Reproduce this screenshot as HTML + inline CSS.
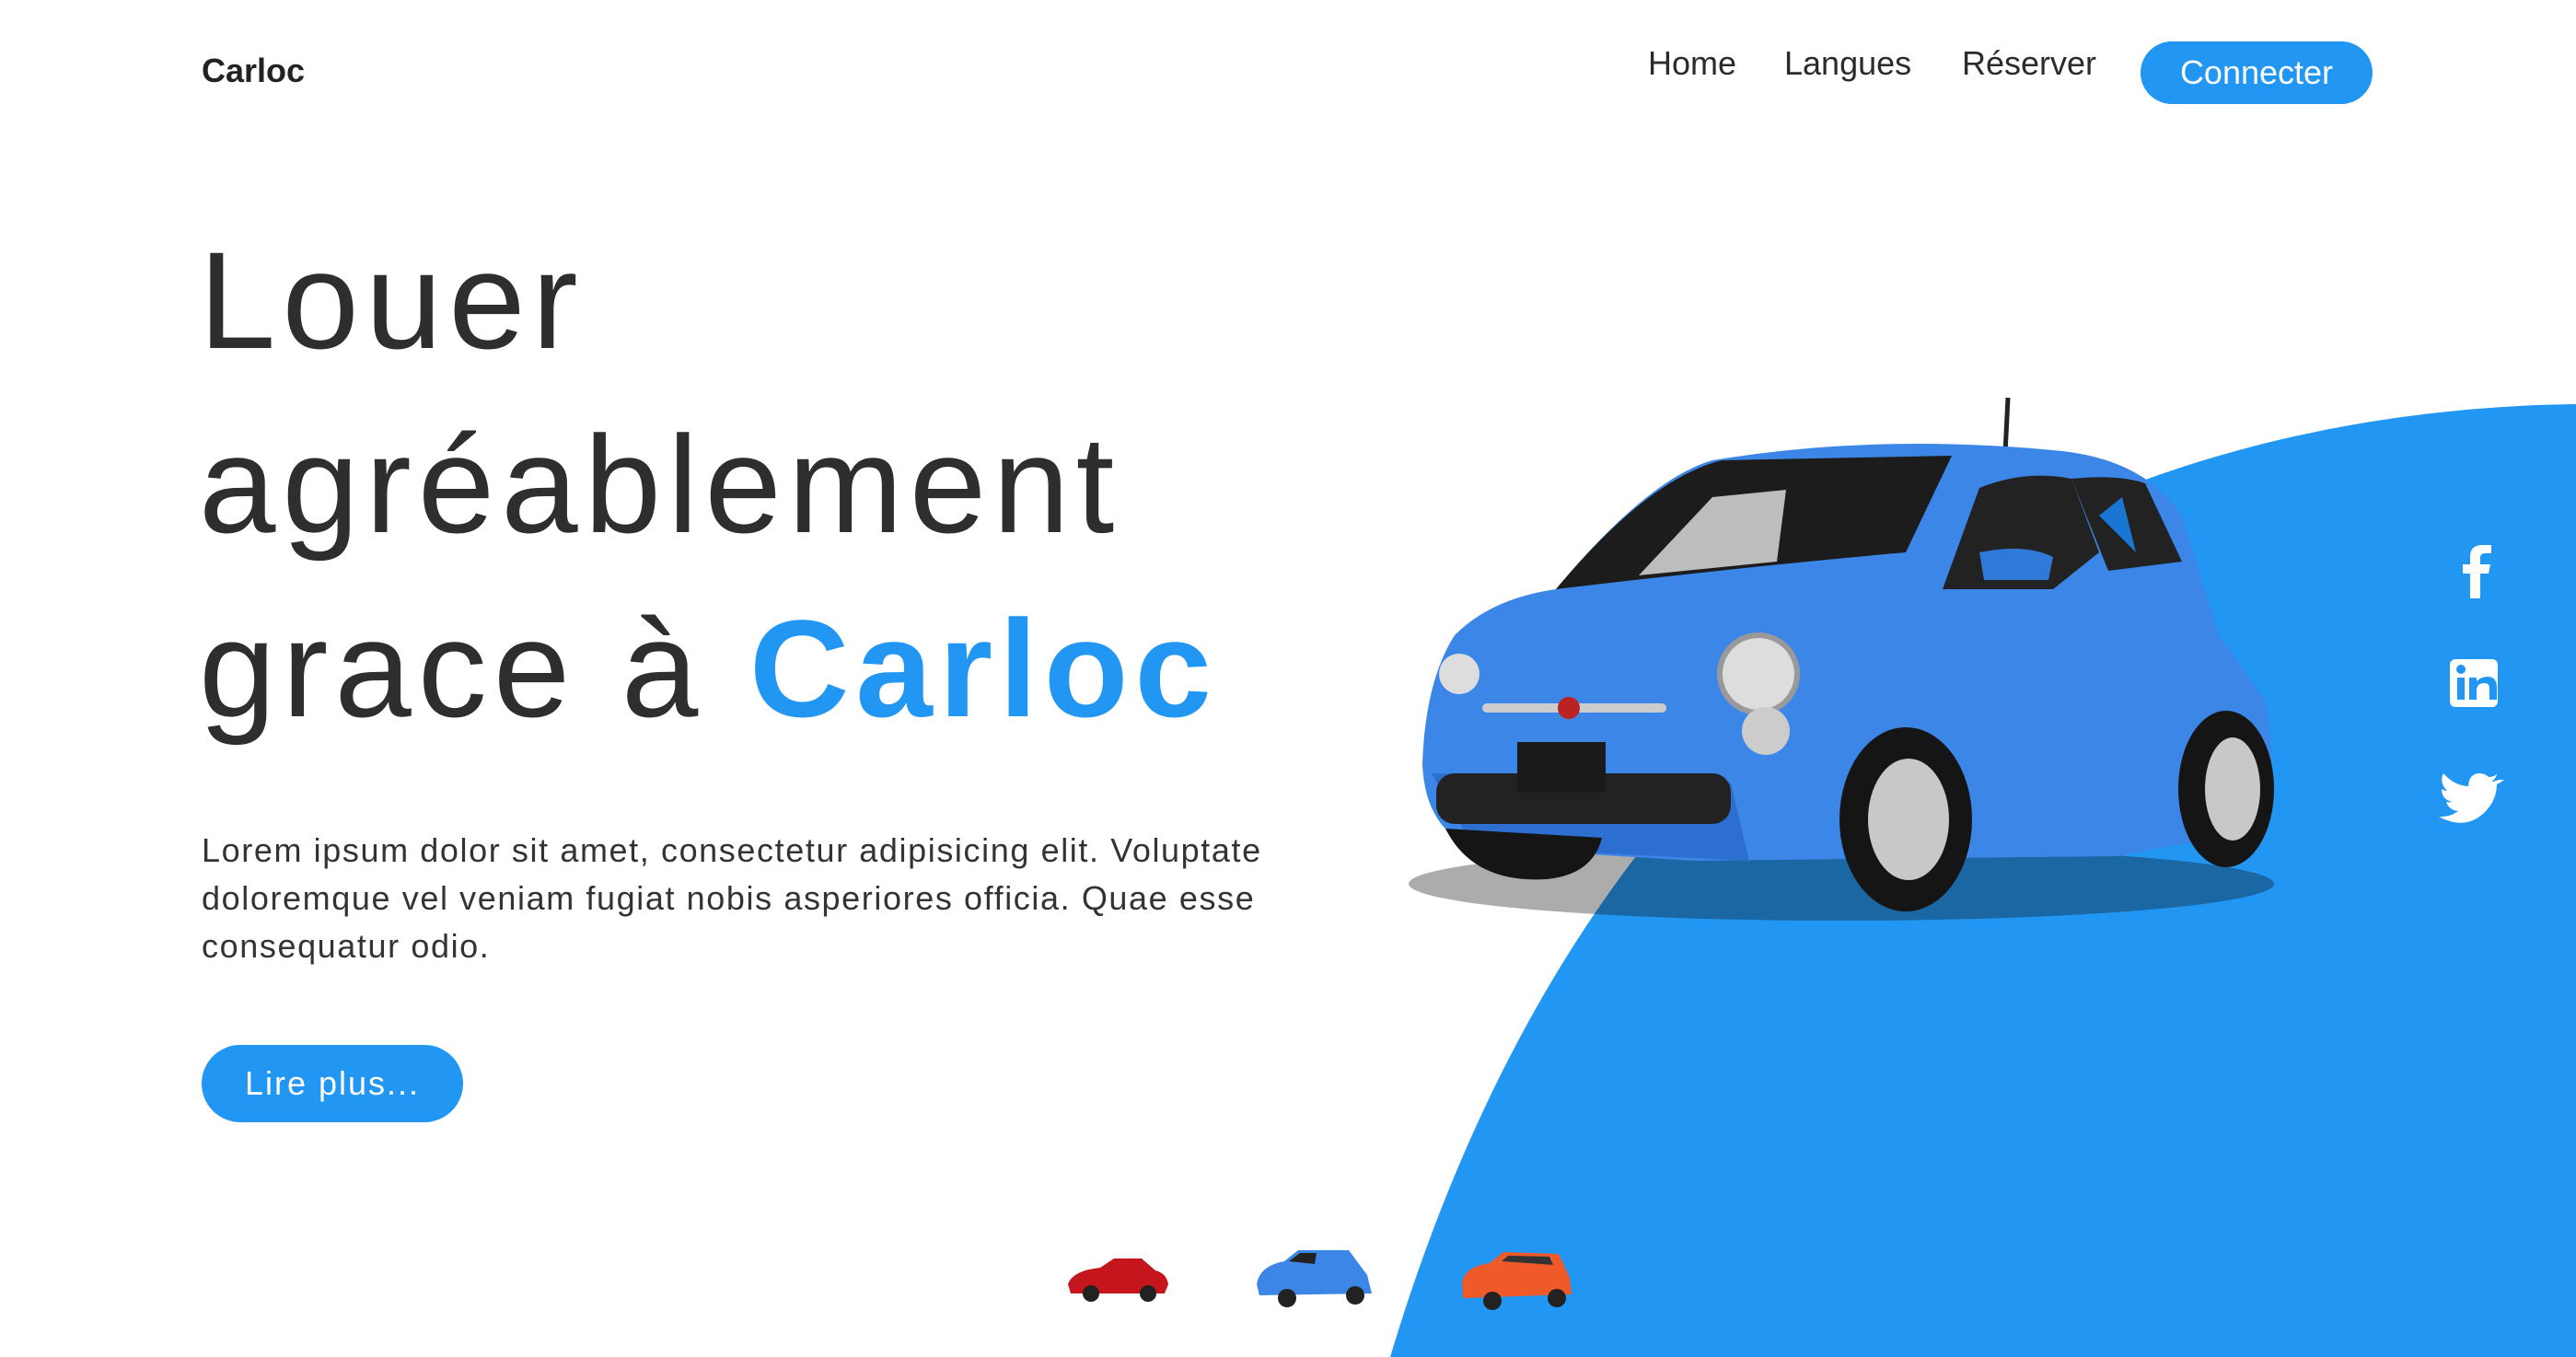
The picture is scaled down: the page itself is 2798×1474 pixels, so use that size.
<!DOCTYPE html>
<html><head><meta charset="utf-8"><style>
*{margin:0;padding:0;box-sizing:border-box}
body{width:2798px;height:1474px;overflow:hidden;background:#fff;font-family:"Liberation Sans",sans-serif;color:#2e2e2e;position:relative}
.abs{position:absolute}
.logo{left:219px;top:56px;font-size:36px;font-weight:bold;color:#222}
.nav{top:48px;font-size:36px;color:#2b2b2b}
.btn{background:#2196f3;color:#fff;border-radius:42px;display:flex;align-items:center;justify-content:center}
h1{position:absolute;left:216px;top:226px;font-size:150px;font-weight:normal;line-height:200px;color:#2e2e2e;letter-spacing:7px}
h1 b{color:#2196f3}
p{position:absolute;left:219px;top:898px;width:1300px;font-size:36px;line-height:52px;color:#333;letter-spacing:1.6px}
</style></head><body>
<svg class="abs" style="left:0;top:0" width="2798" height="1474">
<path d="M2798 439 C2350 445 1760 640 1510 1474 L2798 1474 Z" fill="#2196f3"/>
<ellipse cx="2000" cy="960" rx="470" ry="40" fill="#111" opacity="0.35"/>
<line x1="2181" y1="432" x2="2178" y2="492" stroke="#222" stroke-width="5"/>
<path d="M1690 640 Q1790 520 1860 500 Q2040 470 2240 490 Q2330 500 2370 560 L2410 690 L2460 760 Q2475 830 2460 900 L2300 930 L1840 935 L1600 920 Q1548 900 1545 830 Q1548 740 1580 690 Q1620 650 1690 640 Z" fill="#3c86e8"/>
<path d="M1690 640 Q1790 520 1870 500 L2120 495 L2070 600 Q1900 615 1690 640 Z" fill="#1c1c1c"/>
<path d="M1780 625 L1860 540 L1940 532 L1930 610 Z" fill="#bdbdbd"/>
<path d="M2110 640 L2150 530 Q2200 510 2250 520 L2280 600 L2230 640 Z" fill="#222"/>
<path d="M2250 520 Q2300 515 2330 525 L2370 610 L2290 620 Z" fill="#222"/>
<path d="M2280 560 L2305 540 L2320 600 Z" fill="#1976d2"/>
<path d="M2150 600 Q2200 590 2230 605 L2225 630 L2155 630 Z" fill="#2f7ad9"/>
<path d="M1555 840 L1600 920 L1900 935 L1880 850 Z" fill="#2c6fd0"/>
<rect x="1560" y="840" width="320" height="55" rx="20" fill="#222"/>
<rect x="1648" y="806" width="96" height="55" fill="#1a1a1a"/>
<rect x="1610" y="764" width="200" height="10" rx="5" fill="#ccc"/>
<circle cx="1704" cy="769" r="12" fill="#b22"/>
<circle cx="1910" cy="732" r="42" fill="#ddd" stroke="#999" stroke-width="6"/>
<circle cx="1918" cy="794" r="26" fill="#ccc"/>
<circle cx="1585" cy="732" r="22" fill="#ddd"/>
<ellipse cx="2070" cy="890" rx="72" ry="100" fill="#151515"/>
<ellipse cx="2073" cy="890" rx="44" ry="66" fill="#c8c8c8"/>
<ellipse cx="2418" cy="857" rx="52" ry="85" fill="#151515"/>
<ellipse cx="2425" cy="857" rx="30" ry="56" fill="#c8c8c8"/>
<path d="M1570 900 Q1600 960 1680 955 Q1730 950 1740 910 Z" fill="#151515"/>
<g transform="translate(1155,1365)"><path d="M5 30 Q10 15 40 12 L55 2 L85 2 L100 15 Q112 18 114 30 L110 40 L8 40 Z" fill="#c4161c"/><circle cx="30" cy="40" r="9" fill="#222"/><circle cx="92" cy="40" r="9" fill="#222"/></g>
<g transform="translate(1360,1355)"><path d="M5 40 Q8 20 35 15 L50 3 L105 3 L125 30 L130 50 L8 52 Z" fill="#3c86e8"/><path d="M40 15 L52 6 L70 6 L68 18 Z" fill="#222"/><circle cx="38" cy="55" r="10" fill="#222"/><circle cx="112" cy="52" r="10" fill="#222"/></g>
<g transform="translate(1583,1358)"><path d="M5 35 Q8 18 35 14 L50 2 L110 4 L122 30 L124 48 L6 52 Z" fill="#f05a28"/><path d="M48 12 L55 6 L100 7 L104 16 Z" fill="#333"/><circle cx="38" cy="55" r="10" fill="#222"/><circle cx="108" cy="52" r="10" fill="#222"/></g>
<path d="M2694 650 V623 h9 l2 -10 h-11 v-7 q0 -5 5 -5 h7 v-9 h-10 q-13 0 -13 13 v8 h-8 v10 h8 v27 Z" fill="#fff"/>
<rect x="2661" y="716" width="52" height="52" rx="6" fill="#fff"/>
<rect x="2669" y="736" width="8" height="24" fill="#2196f3"/><circle cx="2673" cy="727" r="5" fill="#2196f3"/>
<path d="M2682 736 h8 v4 q5 -5 12 -5 q10 0 10 12 v13 h-8 v-12 q0 -6 -5 -6 q-9 0 -9 8 v10 h-8 Z" fill="#2196f3"/>
<path d="M2714 847 q-4 2 -8 2 q5 -3 6 -8 q-4 3 -9 3 q-4 -4 -10 -4 q-11 0 -12 14 q-16 -1 -27 -14 q-5 10 4 19 q-3 0 -6 -2 q0 11 11 14 q-3 1 -6 0 q3 9 13 10 q-9 7 -21 6 q34 18 56 -12 q7 -11 7 -23 q4 -2 8 -5 Z" fill="#fff"/>
</svg>
<div class="abs logo">Carloc</div>
<div class="abs nav" style="left:1790px">Home</div>
<div class="abs nav" style="left:1938px">Langues</div>
<div class="abs nav" style="left:2131px">Réserver</div>
<div class="abs btn" style="left:2325px;top:45px;width:252px;height:68px;font-size:36px">Connecter</div>
<h1>Louer<br>agréablement<br>grace à <b>Carloc</b></h1>
<p>Lorem ipsum dolor sit amet, consectetur adipisicing elit. Voluptate doloremque vel veniam fugiat nobis asperiores officia. Quae esse consequatur odio.</p>
<div class="abs btn" style="left:219px;top:1135px;width:284px;height:84px;font-size:36px;letter-spacing:2px">Lire plus...</div>
</body></html>
